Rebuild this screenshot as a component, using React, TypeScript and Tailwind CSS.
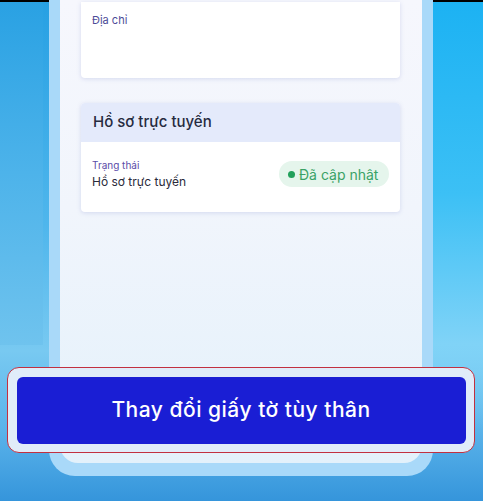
import React from "react";

export default function App() {
  return (
    <div
      className="relative w-[483px] h-[501px] overflow-hidden bg-[linear-gradient(180deg,#27a0e3_0%,#4fb6ec_45%,#78c9f1_70%,#5ab3ea_86%,#3595db_100%)]"
      style={{ fontFamily: "Inter, 'Noto Sans', sans-serif" }}
    >
      {/* right side lighter tone */}
      <div className="absolute right-0 top-0 w-[50px] h-[430px] bg-[linear-gradient(180deg,#1cb2f3_0%,#3cc0f5_45%,#80d3f7_80%,rgba(120,201,241,0)_100%)]" />
      {/* left decorative block */}
      <div className="absolute left-0 top-0 w-[43px] h-[345px] bg-[linear-gradient(180deg,#29a1e3_0%,#4db3ea_50%,#6fc3ee_100%)]" />
      {/* top black strip */}
      <div className="absolute left-0 top-0 w-full h-[2px] bg-black" />

      {/* phone frame */}
      <div className="relative ml-[49px] w-[384px] h-[476px] bg-[#a9d9f9] rounded-b-[26px] px-[11px] pb-[13px]">
        <div className="h-full bg-[linear-gradient(180deg,#f6f7fd_0%,#f1f5fc_45%,#e3f1fb_100%)] rounded-b-[18px] pl-[21px] pr-[22px] pt-[2px] flex flex-col">
          {/* Card 1 */}
          <div className="h-[76px] bg-white rounded-b-[4px] shadow-[0_1px_4px_rgba(120,130,200,0.25)] pl-[11px] pt-[11px]">
            <div className="text-[11px] leading-[14px] text-[#4d4c98]">Địa chỉ</div>
          </div>

          {/* Card 2 */}
          <div className="mt-[25px] h-[109px] bg-white rounded-[4px] overflow-hidden shadow-[0_1px_4px_rgba(120,130,200,0.25)]">
            <div className="h-[39px] bg-[#e4eafb] flex items-center pl-[12px]">
              <span className="text-[15px] font-medium text-[#262b40]">Hồ sơ trực tuyến</span>
            </div>
            <div className="h-[70px] flex items-center justify-between pl-[11px] pr-[11px] pb-[6px]">
              <div className="flex flex-col">
                <span className="text-[10px] leading-[13px] text-[#5a4ca8]">Trạng thái</span>
                <span className="text-[12px] leading-[17px] text-[#2a2a3a] mt-[1px]">Hồ sơ trực tuyến</span>
              </div>
              <div className="h-[26px] w-[110px] rounded-full bg-[#e5f5ec] flex items-center pl-[9px] gap-[4px]">
                <span className="w-[7px] h-[7px] rounded-full bg-[#22a05b]" />
                <span className="text-[14px] text-[#3aa266]">Đã cập nhật</span>
              </div>
            </div>
          </div>
        </div>
      </div>

      {/* highlighted button overlay */}
      <div className="absolute left-[7px] top-[367px] w-[468px] h-[86px] rounded-[12px] border-[1.5px] border-[#c23040] bg-[#e0ecf9] p-[8.5px]">
        <div className="w-full h-full rounded-[6px] bg-[#1a1ed4] flex items-center justify-center">
          <span className="text-[21px] font-medium text-white tracking-[0.5px]">Thay đổi giấy tờ tùy thân</span>
        </div>
      </div>
    </div>
  );
}
